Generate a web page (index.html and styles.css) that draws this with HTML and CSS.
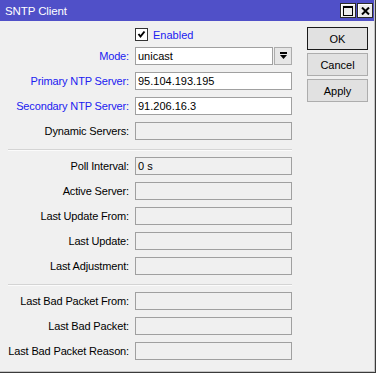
FILE: index.html
```html
<!DOCTYPE html>
<html lang="en">

<head>
    <meta charset="UTF-8">
    <meta name="viewport" content="width=device-width, initial-scale=1.0">
    <link rel="stylesheet" href="styles.css">
    <title>SNTP Client</title>
</head>

<body>
    <div class="window">
        <div class="frame">
            <!-- Title bar -->
            <div class="titlebar">
                <span class="title">SNTP Client</span>
                <div class="controls">
                    <span class="ctl">
                        <svg width="10" height="10" viewBox="0 0 10 10">
                            <rect x="0.5" y="0.5" width="9" height="9" fill="none" stroke="#000" stroke-width="1"/>
                            <rect x="0" y="0" width="10" height="2" fill="#000"/>
                        </svg>
                    </span>
                    <span class="ctl">
                        <svg width="9" height="8" viewBox="0 0 9 8">
                            <path d="M1 0.5 L8 7.5 M8 0.5 L1 7.5" stroke="#000" stroke-width="2" fill="none"/>
                        </svg>
                    </span>
                </div>
            </div>

            <div class="main">
                <form class="fields">
                    <div class="check-row">
                        <span class="checkbox">
                            <svg width="9" height="9" viewBox="0 0 9 9">
                                <path d="M1.5 4 L3.5 6.5 L7.5 1.5" stroke="#000" stroke-width="2" fill="none"/>
                            </svg>
                        </span>
                        <span class="check-label">Enabled</span>
                    </div>

                    <div class="row">
                        <label class="lbl blue">Mode:</label>
                        <span class="box edit mode">unicast</span>
                        <span class="drop">
                            <svg width="9" height="8" viewBox="0 0 9 8">
                                <rect x="1" y="0" width="7" height="2" fill="#000"/>
                                <path d="M1 3 L8 3 L4.5 7 Z" fill="#000"/>
                            </svg>
                        </span>
                    </div>
                    <div class="row">
                        <label class="lbl blue">Primary NTP Server:</label>
                        <span class="box edit">95.104.193.195</span>
                    </div>
                    <div class="row">
                        <label class="lbl blue">Secondary NTP Server:</label>
                        <span class="box edit">91.206.16.3</span>
                    </div>
                    <div class="row">
                        <label class="lbl">Dynamic Servers:</label>
                        <span class="box"></span>
                    </div>

                    <div class="sep"></div>

                    <div class="row">
                        <label class="lbl">Poll Interval:</label>
                        <span class="box">0 s</span>
                    </div>
                    <div class="row">
                        <label class="lbl">Active Server:</label>
                        <span class="box"></span>
                    </div>
                    <div class="row">
                        <label class="lbl">Last Update From:</label>
                        <span class="box"></span>
                    </div>
                    <div class="row">
                        <label class="lbl">Last Update:</label>
                        <span class="box"></span>
                    </div>
                    <div class="row">
                        <label class="lbl">Last Adjustment:</label>
                        <span class="box"></span>
                    </div>

                    <div class="sep"></div>

                    <div class="row">
                        <label class="lbl">Last Bad Packet From:</label>
                        <span class="box"></span>
                    </div>
                    <div class="row">
                        <label class="lbl">Last Bad Packet:</label>
                        <span class="box"></span>
                    </div>
                    <div class="row">
                        <label class="lbl">Last Bad Packet Reason:</label>
                        <span class="box"></span>
                    </div>
                </form>

                <div class="buttons">
                    <button type="button" class="btn default">OK</button>
                    <button type="button" class="btn">Cancel</button>
                    <button type="button" class="btn">Apply</button>
                </div>
            </div>
        </div>
    </div>
</body>

</html>
```

FILE: styles.css
```css
* {
    box-sizing: border-box;
}

body {
    font-family: 'Liberation Sans', Arial, sans-serif;
    font-size: 11px;
    margin: 0;
    padding: 0;
    color: #000;
}

.window {
    width: 376px;
    height: 373px;
    border-right: 1px solid #3a3a3a;
    border-bottom: 1px solid #3a3a3a;
    background-color: #f0f0f0;
}

.frame {
    height: 100%;
    border-right: 1px solid #c4c4c4;
    border-bottom: 1px solid #c4c4c4;
}

.titlebar {
    height: 21px;
    display: flex;
    align-items: flex-start;
    background-color: #5050c8;
    color: #fff;
}

.title {
    padding: 4px 0 0 5px;
    font-size: 11.5px;
    line-height: 14px;
    letter-spacing: -0.1px;
}

.controls {
    margin-left: auto;
    margin-right: 1px;
    margin-top: 3px;
    display: flex;
    gap: 1px;
}

.ctl {
    width: 16px;
    height: 15px;
    display: flex;
    align-items: center;
    justify-content: center;
    background-color: #ececec;
    border: 1px solid #2a2a2a;
    box-shadow: inset 1px 1px 0 #fff;
}

.main {
    display: flex;
}

.fields {
    width: 292px;
    padding-top: 7px;
    display: flex;
    flex-direction: column;
}

.check-row {
    height: 13px;
    padding-left: 135px;
    display: flex;
    align-items: center;
}

.checkbox {
    width: 13px;
    height: 13px;
    display: flex;
    align-items: center;
    justify-content: center;
    background-color: #fff;
    border: 1px solid #333;
}

.check-label {
    margin-left: 5px;
    color: #2020f0;
}

.row {
    height: 18px;
    margin-top: 7px;
    display: flex;
    align-items: center;
}

.check-row + .row {
    margin-top: 6px;
}

.lbl {
    width: 129px;
    margin-right: 6px;
    text-align: right;
    white-space: nowrap;
    letter-spacing: -0.15px;
}

.blue {
    color: #2020f0;
}

.box {
    width: 157px;
    height: 18px;
    padding-left: 2px;
    line-height: 16px;
    border: 1px solid #a0a0a0;
    background-color: #f0f0f0;
    white-space: nowrap;
}

.edit {
    background-color: #fff;
}

.mode {
    width: 138px;
}

.drop {
    width: 18px;
    height: 18px;
    margin-left: 1px;
    display: flex;
    align-items: center;
    justify-content: center;
    border: 1px solid #acacac;
    background-color: #e6e6e6;
}

.sep {
    height: 2px;
    margin: 9px 0 0 8px;
    border-top: 1px solid #d4d4d4;
    border-bottom: 1px solid #fbfbfb;
}

.sep + .row {
    margin-top: 6px;
}

.buttons {
    margin-left: 15px;
    padding-top: 6px;
    display: flex;
    flex-direction: column;
    gap: 3px;
}

.btn {
    width: 61px;
    height: 23px;
    padding: 0;
    font-family: 'Liberation Sans', Arial, sans-serif;
    font-size: 11px;
    color: #000;
    background-color: #e1e1e1;
    border: 1px solid #adadad;
    border-radius: 0;
}

.btn.default {
    border: 1px solid #1a1a1a;
}
```
